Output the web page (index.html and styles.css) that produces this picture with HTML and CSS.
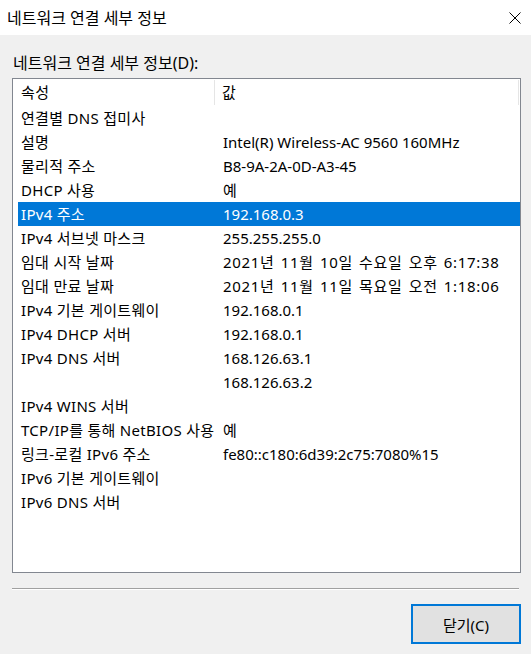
FILE: index.html
```html
<!DOCTYPE html>
<html lang="ko">
<head>
<meta charset="utf-8">
<title>네트워크 연결 세부 정보</title>
<link rel="stylesheet" href="styles.css">
</head>
<body>
<div class="window">
  <div class="titlebar">
    <span class="title">네트워크 연결 세부 정보</span>
    <svg class="close" width="12" height="12" viewBox="0 0 12 12"><path d="M0.5 0.5 L11.5 11.5 M11.5 0.5 L0.5 11.5" stroke="#000" stroke-width="1" fill="none"/></svg>
  </div>
  <div class="body">
    <div class="label">네트워크 연결 세부 정보(D):</div>
    <div class="listbox">
      <div class="header">
        <div class="hcell c1">속성</div>
        <div class="hcell c2">값</div>
      </div>
      <div class="rows">
        <div class="row"><span class="c1">연결별 DNS 접미사</span><span class="c2"></span></div>
        <div class="row"><span class="c1">설명</span><span class="c2">Intel(R) Wireless-AC 9560 160MHz</span></div>
        <div class="row"><span class="c1">물리적 주소</span><span class="c2">B8-9A-2A-0D-A3-45</span></div>
        <div class="row"><span class="c1">DHCP 사용</span><span class="c2 ko">예</span></div>
        <div class="row selected"><span class="c1">IPv4 주소</span><span class="c2">192.168.0.3</span></div>
        <div class="row"><span class="c1">IPv4 서브넷 마스크</span><span class="c2">255.255.255.0</span></div>
        <div class="row"><span class="c1">임대 시작 날짜</span><span class="c2 ko">2021년 11월 10일 수요일 오후 6:17:38</span></div>
        <div class="row"><span class="c1">임대 만료 날짜</span><span class="c2 ko">2021년 11월 11일 목요일 오전 1:18:06</span></div>
        <div class="row"><span class="c1">IPv4 기본 게이트웨이</span><span class="c2">192.168.0.1</span></div>
        <div class="row"><span class="c1">IPv4 DHCP 서버</span><span class="c2">192.168.0.1</span></div>
        <div class="row"><span class="c1">IPv4 DNS 서버</span><span class="c2">168.126.63.1</span></div>
        <div class="row"><span class="c1"></span><span class="c2">168.126.63.2</span></div>
        <div class="row"><span class="c1">IPv4 WINS 서버</span><span class="c2"></span></div>
        <div class="row"><span class="c1">TCP/IP를 통해 NetBIOS 사용</span><span class="c2 ko">예</span></div>
        <div class="row"><span class="c1">링크-로컬 IPv6 주소</span><span class="c2">fe80::c180:6d39:2c75:7080%15</span></div>
        <div class="row"><span class="c1">IPv6 기본 게이트웨이</span><span class="c2"></span></div>
        <div class="row"><span class="c1">IPv6 DNS 서버</span><span class="c2"></span></div>
      </div>
    </div>
    <div class="divider"></div>
    <div class="actions">
      <button class="btn">닫기(C)</button>
    </div>
  </div>
</div>
</body>
</html>
```
FILE: styles.css
```css
html, body {
  margin: 0;
  padding: 0;
}
body {
  width: 531px;
  height: 654px;
  overflow: hidden;
  background: #f0f0f0;
  font-family: "Noto Sans", "Noto Sans CJK KR", sans-serif;
  font-size: 15px;
  color: #000;
}
.window {
  display: flex;
  flex-direction: column;
  height: 654px;
}
.titlebar {
  height: 35px;
  background: #fff;
  display: flex;
  align-items: center;
  justify-content: space-between;
  padding: 0 10px 0 7px;
  box-sizing: border-box;
}
.title {
  font-size: 16px;
  line-height: 20px;
}
.close {
  display: block;
}
.body {
  padding: 0 10px 0 12px;
}
.label {
  margin-top: 18px;
  height: 20px;
  line-height: 20px;
  padding-left: 1px;
  font-size: 16px;
}
.listbox {
  margin-top: 5px;
  height: 495px;
  box-sizing: border-box;
  border: 1px solid #828790;
  background: #fff;
  width: 509px;
}
.header {
  height: 27px;
  display: flex;
  align-items: stretch;
}
.hcell {
  box-sizing: border-box;
}
.header .c1 {
  width: 202px;
  padding-left: 8px;
  border-right: 1px solid #e5e5e5;
  margin: 1px 0 1px 0;
  line-height: 25px;
  letter-spacing: 0.5px;
}
.header .c2 {
  flex: 1;
  padding-left: 7px;
  border-right: 1px solid #e5e5e5;
  margin: 1px 1px 1px 0;
  line-height: 25px;
}
.rows {
  margin-left: 5px;
}
.row {
  display: flex;
  height: 24px;
  line-height: 24px;
  white-space: nowrap;
}
.row .c1 {
  width: 205px;
  padding-left: 3px;
  box-sizing: border-box;
  letter-spacing: 0.3px;
}
.row .c2 {
  flex: 1;
}
.row .c2.ko {
  letter-spacing: 0.7px;
  word-spacing: 1.5px;
}
.row.selected {
  background: #0078d7;
  color: #fff;
}
.divider {
  margin-top: 15px;
  width: 507px;
  height: 1px;
  background: #a0a0a0;
  border-bottom: 1px solid #fff;
}
.actions {
  display: flex;
  justify-content: flex-end;
  margin-top: 14px;
}
.btn {
  width: 110px;
  height: 40px;
  box-sizing: border-box;
  border: 2px solid #0078d7;
  background: #e1e1e1;
  font-family: "Noto Sans", "Noto Sans CJK KR", sans-serif;
  font-size: 15px;
  color: #000;
  padding: 0;
  margin: 0;
}
```
